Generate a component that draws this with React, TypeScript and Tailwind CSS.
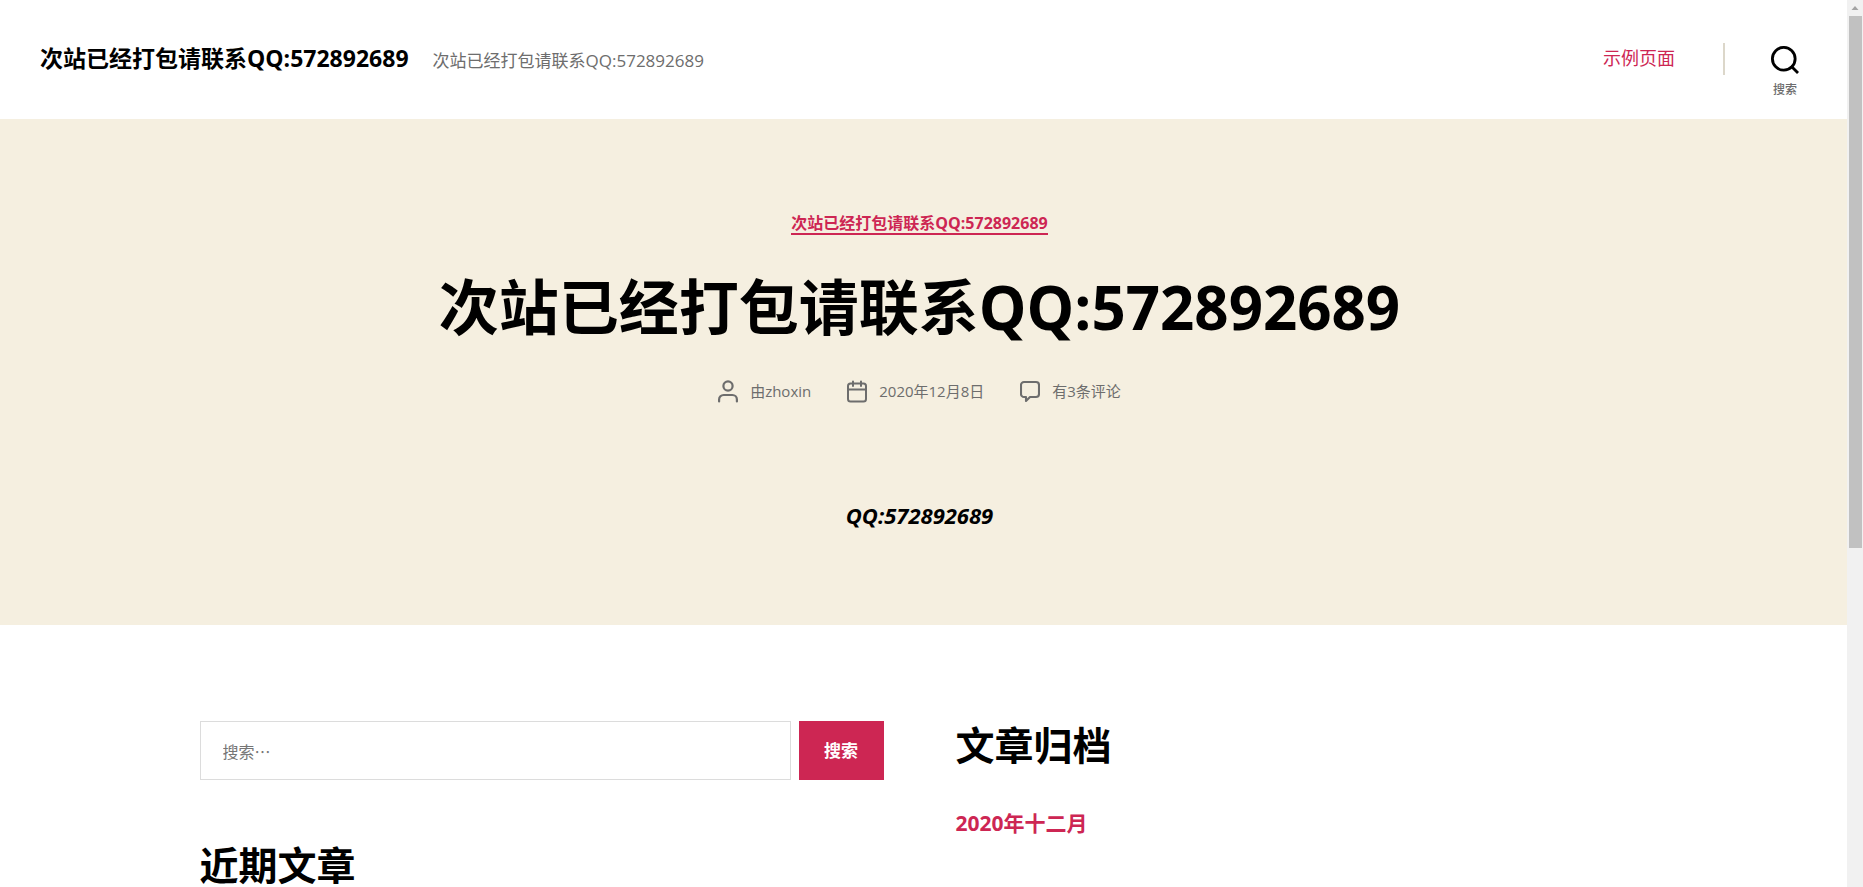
import React from "react";

const strong = "font-bold text-black";

function SearchIcon() {
  return (
    <svg className="size-7" viewBox="0 0 23 23" fill="none" stroke="currentColor" strokeWidth="2.33">
      <circle cx="10.5" cy="10.5" r="9.34" />
      <path d="M16.4 16.4 22.2 22.2" />
    </svg>
  );
}

function UserIcon() {
  return (
    <svg className="h-[23px] w-5" viewBox="0 0 20 23" fill="none" stroke="currentColor" strokeWidth="2.2" strokeLinecap="round">
      <circle cx="10" cy="6" r="4.6" />
      <path d="M1.1 21.5V19.5a4.5 4.5 0 0 1 4.5-4.5h8.8a4.5 4.5 0 0 1 4.5 4.5v2" />
    </svg>
  );
}

function CalendarIcon() {
  return (
    <svg className="h-[23px] w-5" viewBox="0 0 20 23" fill="none" stroke="currentColor" strokeWidth="2" strokeLinecap="round">
      <rect x="1" y="3.5" width="18" height="18" rx="2.5" />
      <path d="M6 1.5V6M14 1.5V6M1 9.5h18" />
    </svg>
  );
}

function CommentIcon() {
  return (
    <svg className="h-[23px] w-5" viewBox="0 0 20 23" fill="none" stroke="currentColor" strokeWidth="2.1" strokeLinejoin="round">
      <path d="M4 2h12a3 3 0 0 1 3 3v9a3 3 0 0 1-3 3h-6l-4 4v-4H4a3 3 0 0 1-3-3V5a3 3 0 0 1 3-3Z" />
    </svg>
  );
}

const postMeta = [
  { icon: <UserIcon />, text: "由zhoxin", href: "#author" },
  { icon: <CalendarIcon />, text: "2020年12月8日", href: "#date" },
  { icon: <CommentIcon />, text: "有3条评论", href: "#comments" },
];

function Header() {
  return (
    <header className="flex items-start justify-between bg-white pt-[38px] pr-12 pb-[21px] pl-10">
      <div className="flex items-baseline gap-6">
        <a href="#home" className={`text-[23px] leading-10 ${strong}`}>
          次站已经打包请联系QQ:572892689
        </a>
        <p className="text-[17px] text-[#6d6d6d]">次站已经打包请联系QQ:572892689</p>
      </div>
      <div className="flex items-start">
        <nav>
          <a href="#sample" className="text-lg leading-10 text-[#cd2653]">
            示例页面
          </a>
        </nav>
        <div className="mt-[5px] ml-12 h-8 w-0.5 bg-[#dcd7ca]" />
        <button className="mt-2 ml-[46px] flex w-7 flex-col items-center gap-2 text-black">
          <SearchIcon />
          <span className="text-xs font-medium whitespace-nowrap text-[#6d6d6d]">搜索</span>
        </button>
      </div>
    </header>
  );
}

function PostHeader() {
  return (
    <article className="flex flex-col items-center bg-[#f5efe0] py-[94px] pr-2">
      <a
        href="#category"
        className="border-b-2 border-[#cd2653] text-base leading-5 font-bold text-[#cd2653]"
      >
        次站已经打包请联系QQ:572892689
      </a>
      <h1 className={`mt-8 text-6xl leading-20 ${strong}`}>次站已经打包请联系QQ:572892689</h1>
      <ul className="mt-8 flex gap-9 text-[#6d6d6d]">
        {postMeta.map((item) => (
          <li key={item.text} className="flex items-center gap-3">
            {item.icon}
            <a href={item.href} className="text-[15px] leading-6">
              {item.text}
            </a>
          </li>
        ))}
      </ul>
      <p className={`mt-24 text-[22px] leading-8 italic ${strong}`}>QQ:572892689</p>
    </article>
  );
}

function Widgets() {
  return (
    <div className="px-10 pt-24 pb-10 lg:pr-2 lg:pl-0">
      <div className="mx-auto grid max-w-[1440px] grid-cols-2 gap-18">
        <div>
          <form className="flex gap-2" onSubmit={(e) => e.preventDefault()}>
            <input
              type="search"
              aria-label="搜索"
              placeholder="搜索…"
              className="h-[59px] min-w-0 flex-1 border border-[#dcdcdc] px-[22px] font-['Noto_Sans_CJK_SC',sans-serif] text-base placeholder:text-[#757575]"
            />
            <button className="w-[85px] bg-[#cd2653] text-[17px] font-bold text-white">搜索</button>
          </form>
          <h2 className={`mt-[65px] text-[39px] leading-10 ${strong}`}>近期文章</h2>
        </div>
        <div>
          <h2 className={`text-[39px] leading-12 ${strong}`}>文章归档</h2>
          <ul className="mt-10">
            <li>
              <a href="#archive" className="text-[21px] leading-7 font-bold text-[#cd2653]">
                2020年十二月
              </a>
            </li>
          </ul>
        </div>
      </div>
    </div>
  );
}

function Scrollbar() {
  return (
    <div className="flex w-4 shrink-0 flex-col items-center bg-[#f1f1f1]">
      <svg className="h-4 w-4 shrink-0" viewBox="0 0 16 16" fill="#a3a3a3">
        <path d="M4.5 10 8 6l3.5 4Z" />
      </svg>
      <div className="h-3/5 w-[13px] bg-[#c1c1c1]" />
    </div>
  );
}

function App() {
  return (
    <div className="flex h-screen overflow-hidden bg-white font-['Open_Sans','Noto_Sans_CJK_SC',sans-serif]">
      <div className="h-full flex-1 overflow-hidden">
        <Header />
        <PostHeader />
        <Widgets />
      </div>
      <Scrollbar />
    </div>
  );
}

export default App;
